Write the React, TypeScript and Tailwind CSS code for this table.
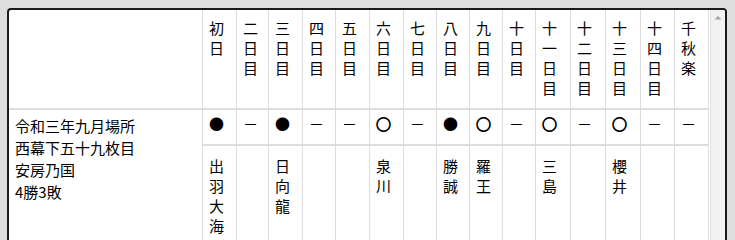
import React from 'react';

const days = [
  { label: '初日', result: '●', opponent: '出羽大海' },
  { label: '二日目', result: '－', opponent: '' },
  { label: '三日目', result: '●', opponent: '日向龍' },
  { label: '四日目', result: '－', opponent: '' },
  { label: '五日目', result: '－', opponent: '' },
  { label: '六日目', result: '○', opponent: '泉川' },
  { label: '七日目', result: '－', opponent: '' },
  { label: '八日目', result: '●', opponent: '勝誠' },
  { label: '九日目', result: '○', opponent: '羅王' },
  { label: '十日目', result: '－', opponent: '' },
  { label: '十一日目', result: '○', opponent: '三島' },
  { label: '十二日目', result: '－', opponent: '' },
  { label: '十三日目', result: '○', opponent: '櫻井' },
  { label: '十四日目', result: '－', opponent: '' },
  { label: '千秋楽', result: '－', opponent: '' },
];

const App = () => {
  return (
    <div className="w-[735px] h-[240px] overflow-hidden bg-[#dedede] pl-[7px] pt-[8px] font-['Noto_Sans_CJK_JP','Noto_Sans',sans-serif] text-[15px] text-black">
      {/* Frame */}
      <div className="w-[720px] h-[260px] flex overflow-hidden rounded-[4px] border-2 border-[#1a1a1a] bg-white">
        <div className="w-[701px] shrink-0">
          <div className="w-[700px] grid grid-cols-[193px_34px_32px_34px_33px_34px_34px_33px_33px_33px_33px_35px_35px_35px_34px_35px] grid-rows-[100px_36px_100px]">
            {/* Header */}
            <div className="border-b-2 border-[#dddddd]" />
            {days.map((d, i) => (
              <div
                key={d.label}
                className={`border-l border-b-2 border-[#dddddd] px-[6px] pt-2 leading-5 break-all ${i === days.length - 1 ? 'border-r' : ''}`}
              >
                {d.label}
              </div>
            ))}

            {/* Rikishi info */}
            <div className="row-span-2 px-[6px] pt-[5px] leading-[22px]">
              <div>令和三年九月場所</div>
              <div>西幕下五十九枚目</div>
              <div>安房乃国</div>
              <div>4勝3敗</div>
            </div>

            {/* Results */}
            {days.map((d, i) => (
              <div
                key={'r' + d.label}
                className={`border-l border-b-2 border-[#dddddd] px-[6px] pt-[4px] leading-5 ${d.result === '○' ? '[-webkit-text-stroke:0.9px_black]' : ''} ${i === days.length - 1 ? 'border-r' : ''}`}
              >
                {d.result}
              </div>
            ))}

            {/* Opponents */}
            {days.map((d, i) => (
              <div
                key={'o' + d.label}
                className={`border-l border-[#dddddd] px-[6px] pt-[10px] leading-5 break-all ${i === days.length - 1 ? 'border-r' : ''}`}
              >
                {d.opponent}
              </div>
            ))}
          </div>
        </div>

        {/* Scrollbar */}
        <div className="w-[15px] shrink-0 bg-[#f1f1f1] border-l border-[#e6e6e6]">
          <svg width="14" height="15" viewBox="0 0 14 15">
            <polygon points="3.5,9.5 10.5,9.5 7,6" fill="#a3a3a3" />
          </svg>
        </div>
      </div>
    </div>
  );
};

export default App;
